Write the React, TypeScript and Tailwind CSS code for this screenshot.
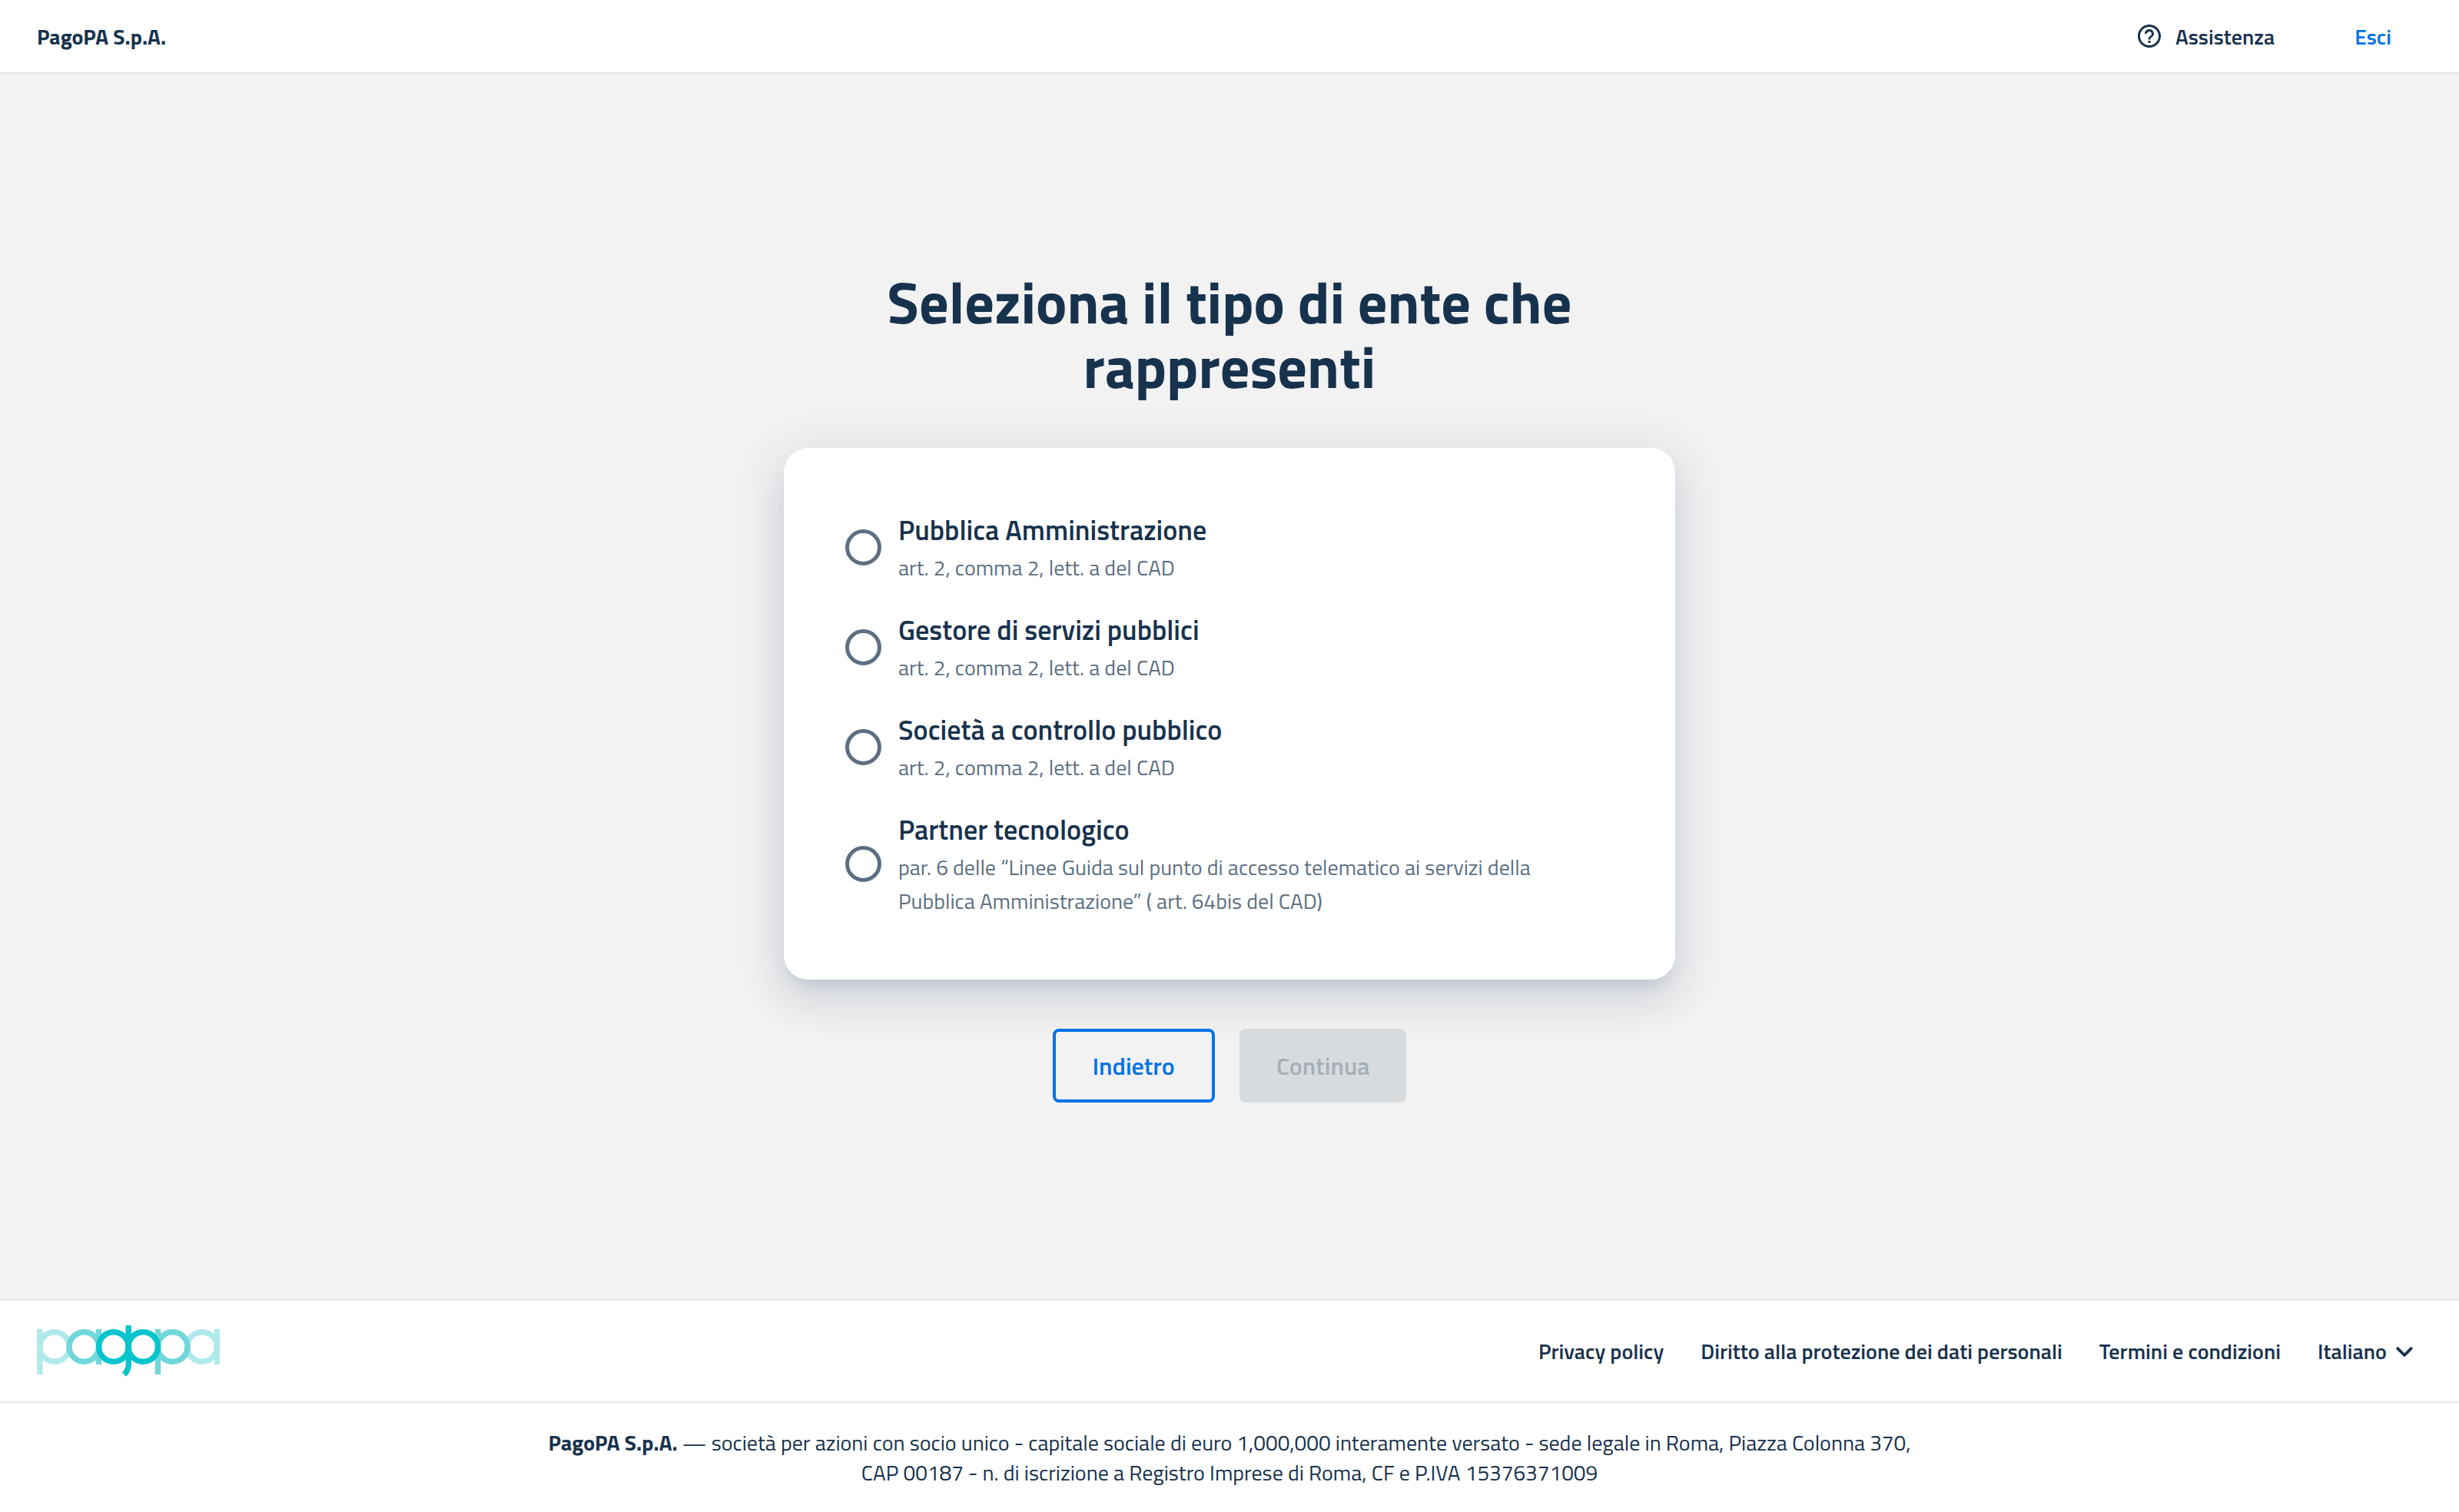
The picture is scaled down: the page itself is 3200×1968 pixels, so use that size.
const options = [
  { id: "pa", title: "Pubblica Amministrazione", note: "art. 2, comma 2, lett. a del CAD" },
  { id: "gsp", title: "Gestore di servizi pubblici", note: "art. 2, comma 2, lett. a del CAD" },
  { id: "scp", title: "Società a controllo pubblico", note: "art. 2, comma 2, lett. a del CAD" },
  {
    id: "pt",
    title: "Partner tecnologico",
    note: "par. 6 delle “Linee Guida sul punto di accesso telematico ai servizi della Pubblica Amministrazione” ( art. 64bis del CAD)",
  },
];

const links = ["Privacy policy", "Diritto alla protezione dei dati personali", "Termini e condizioni"];

function HelpIcon() {
  return (
    <svg viewBox="0 0 24 24" className="size-9" fill="currentColor" aria-hidden="true">
      <path d="M11 18h2v-2h-2v2zm1-16C6.48 2 2 6.48 2 12s4.48 10 10 10 10-4.48 10-10S17.52 2 12 2zm0 18c-4.41 0-8-3.59-8-8s3.59-8 8-8 8 3.59 8 8-3.59 8-8 8zm0-14c-2.21 0-4 1.79-4 4h2c0-1.1.9-2 2-2s2 .9 2 2c0 2-3 1.75-3 5h2c0-2.25 3-2.5 3-5 0-2.21-1.79-4-4-4z" />
    </svg>
  );
}

function Logo() {
  return (
    <svg viewBox="0 0 238 67" className="h-[67px] w-[238px]" fill="none" strokeWidth="7.4" role="img" aria-label="pagoPA">
      <g stroke="#B0E9EA">
        <path d="M3.7 5V64M234.3 5V51" />
        <circle cx="23" cy="28" r="19.3" />
        <circle cx="215" cy="28" r="19.3" />
      </g>
      <g stroke="#70D7DA">
        <path d="M80.5 5V51M157.5 5V64" />
        <circle cx="61.4" cy="28" r="19.3" />
        <circle cx="176.7" cy="28" r="19.3" />
      </g>
      <g stroke="#06C5CC">
        <path d="M119.2 0V51C119.2 56 117.6 60.2 113.5 64.2" />
        <circle cx="99.9" cy="28" r="19.3" />
        <circle cx="138.3" cy="28" r="19.3" />
      </g>
    </svg>
  );
}

export default function App() {
  return (
    <div className="flex min-h-screen flex-col bg-[#F2F2F2] font-['Titillium_Web',Roboto,sans-serif] text-[28px] leading-[39px] text-[#17324D] antialiased">
      <header className="flex h-24 items-center justify-between border-b-2 border-[#E3E7EB] bg-white px-12">
        <span className="font-bold">PagoPA S.p.A.</span>
        <div className="flex items-center gap-16 font-semibold">
          <button type="button" className="flex items-center gap-4">
            <HelpIcon />
            Assistenza
          </button>
          <button type="button" className="px-10 text-[#0073E6]">
            Esci
          </button>
        </div>
      </header>

      <main className="flex flex-1 flex-col items-center justify-center gap-16 px-12 pt-16 pb-[65px]">
        <h1 className="max-w-[1000px] text-center text-[76px] leading-[84px] font-bold">
          Seleziona il tipo di ente che rappresenti
        </h1>

        <fieldset className="flex w-full max-w-[1160px] flex-col gap-8 rounded-[32px] bg-white p-20 shadow-[0_16px_20px_-10px_rgba(0,43,85,0.1),0_32px_48px_4px_rgba(0,43,85,0.05),0_12px_60px_10px_rgba(0,43,85,0.1)]">
          {options.map((o) => (
            <label key={o.id} htmlFor={o.id} className="flex items-center gap-[22px]">
              <input
                id={o.id}
                type="radio"
                name="ente"
                className="size-[47px] shrink-0 appearance-none rounded-full border-5 border-[#5C6F82] checked:border-[14px] checked:border-[#0073E6]"
              />
              <span className="flex max-w-[870px] flex-col">
                <span className="text-[36px] leading-[54px] font-semibold">{o.title}</span>
                <span className="leading-[44px] text-[#5C6F82]">{o.note}</span>
              </span>
            </label>
          ))}
        </fieldset>

        <div className="flex gap-8 text-[32px] font-semibold">
          <button type="button" className="h-24 rounded-lg border-4 border-[#0073E6] px-12 text-[#0073E6]">
            Indietro
          </button>
          <button type="button" disabled className="h-24 rounded-lg bg-[#D7DBDE] px-12 text-[#A5AFB8]">
            Continua
          </button>
        </div>
      </main>

      <footer className="bg-white">
        <div className="flex items-center justify-between border-y-2 border-[#E3E7EB] px-12 py-8">
          <Logo />
          <nav className="flex items-center gap-12 font-semibold">
            {links.map((l) => (
              <a key={l} href="#">
                {l}
              </a>
            ))}
            <label className="flex items-center">
              <select aria-label="Lingua" className="appearance-none bg-transparent">
                <option>Italiano</option>
              </select>
              <svg viewBox="0 0 24 24" className="size-[46px]" fill="currentColor" aria-hidden="true">
                <path d="M8.12 9.29 12 13.17l3.88-3.88c.39-.39 1.02-.39 1.41 0 .39.39.39 1.02 0 1.41l-4.59 4.59c-.39.39-1.02.39-1.41 0L6.7 10.7c-.39-.39-.39-1.02 0-1.41.39-.38 1.03-.39 1.42 0z" />
              </svg>
            </label>
          </nav>
        </div>
        <p className="mx-auto max-w-[1800px] py-8 text-center">
          <strong className="font-bold">PagoPA S.p.A.</strong> — società per azioni con socio unico - capitale sociale di
          euro 1,000,000 interamente versato - sede legale in Roma, Piazza Colonna 370, CAP 00187 - n. di iscrizione a
          Registro Imprese di Roma, CF e P.IVA 15376371009
        </p>
      </footer>
    </div>
  );
}
